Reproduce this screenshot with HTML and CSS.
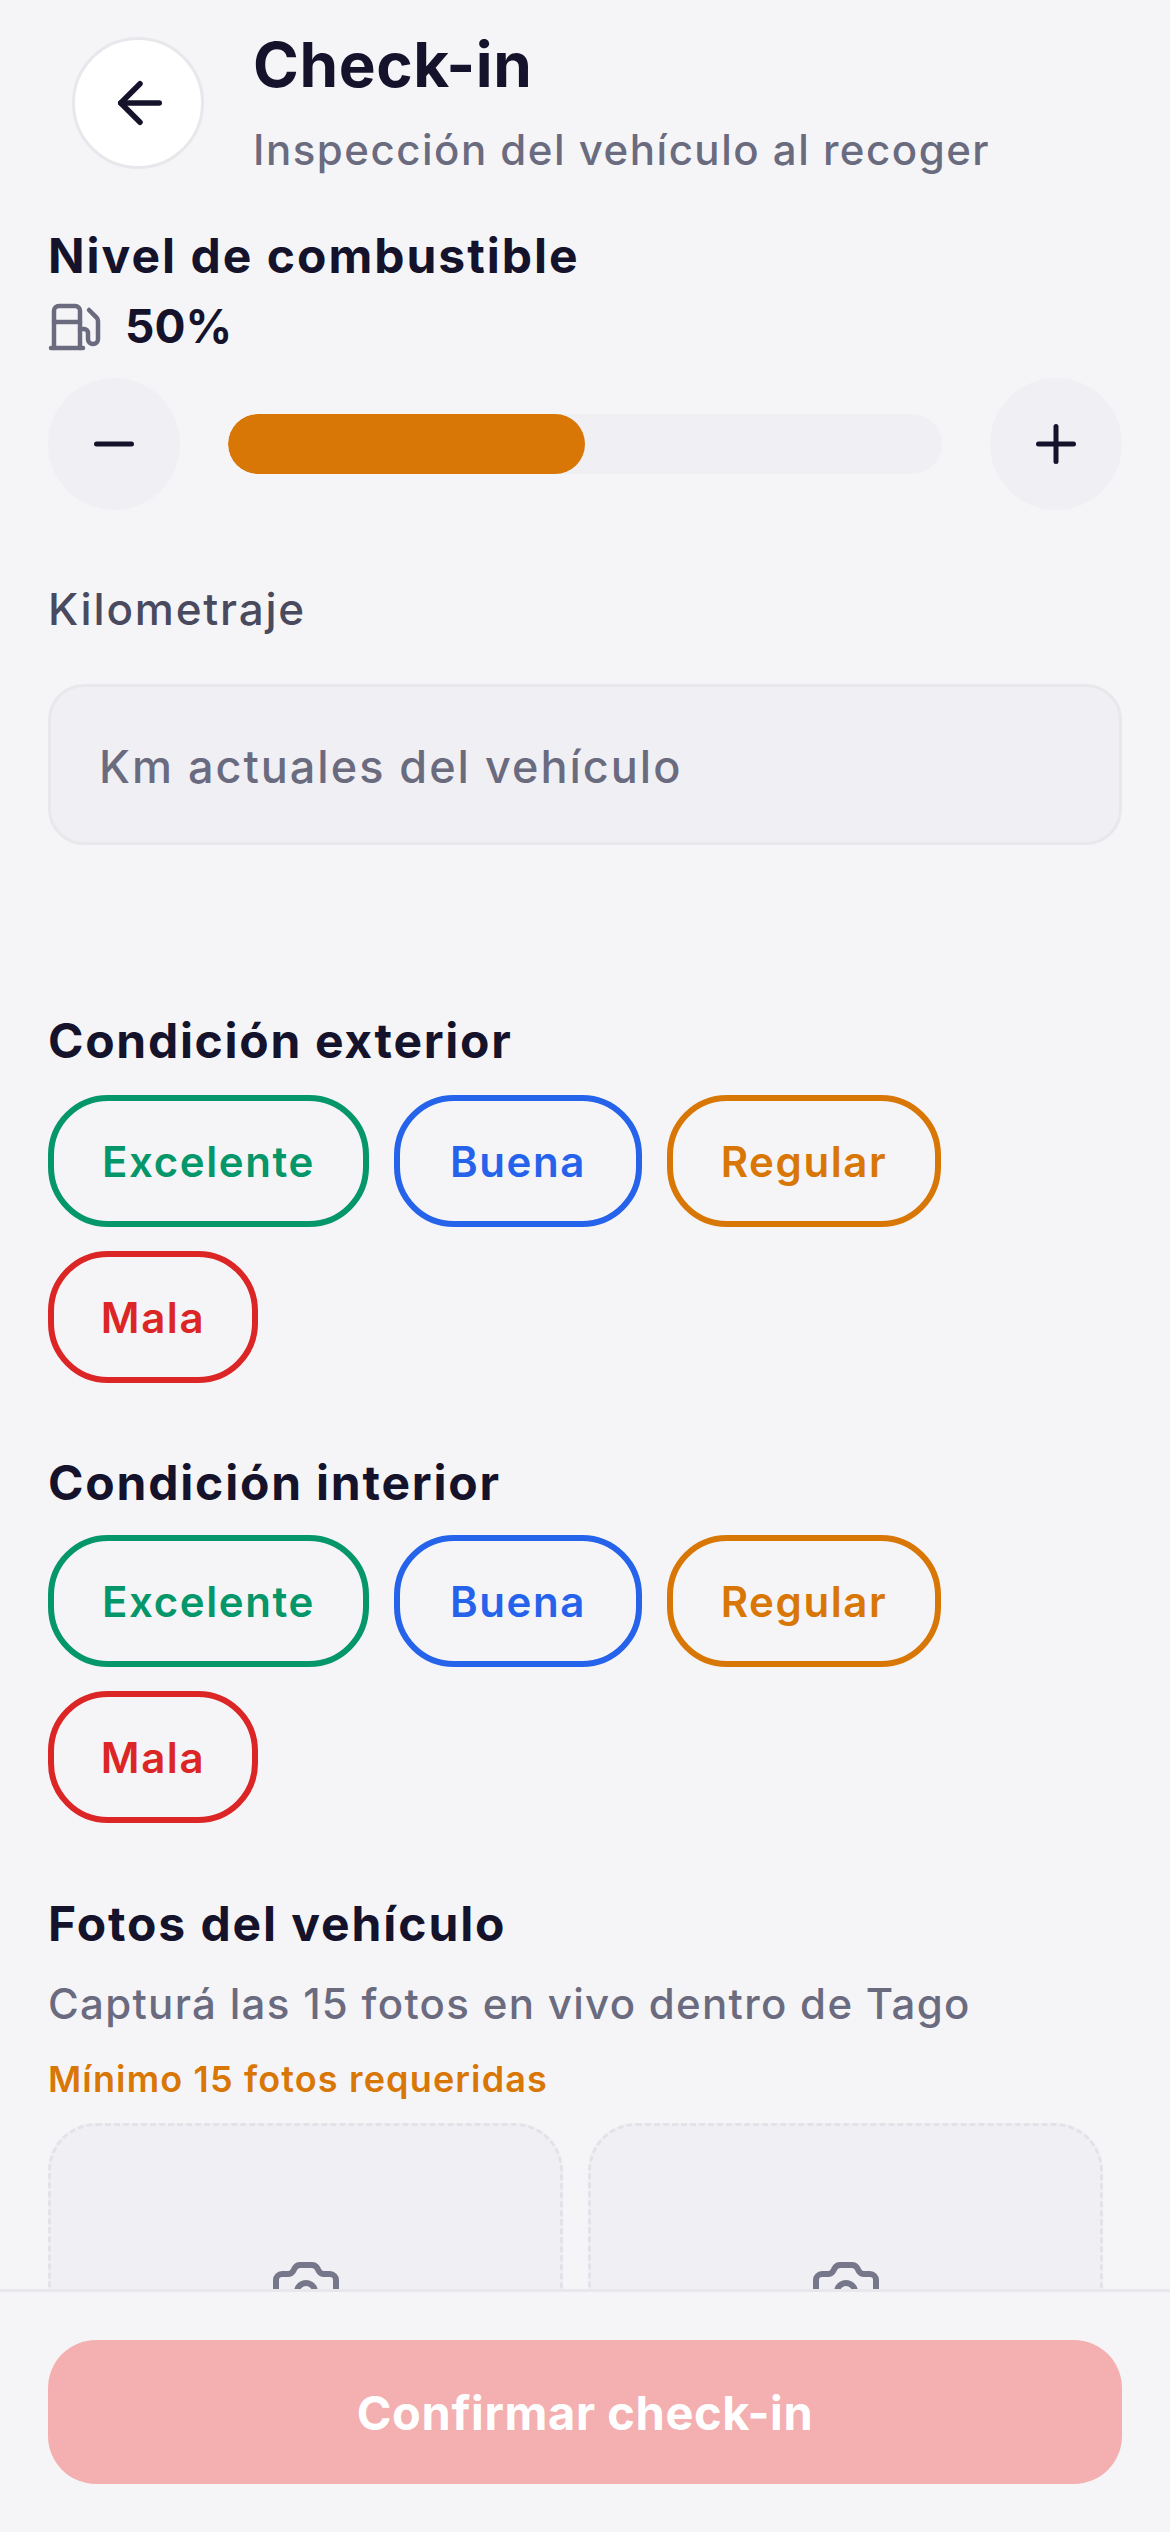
FILE: index.html
```html
<!DOCTYPE html>
<html lang="es">
<head>
<meta charset="utf-8">
<title>Check-in</title>
<link rel="stylesheet" href="styles.css">
</head>
<body>
<div class="screen">
  <main class="content">
    <header class="header">
      <button class="back" aria-label="Volver">
        <svg class="back-icon" viewBox="0 0 24 24"><path d="M12 19l-7-7 7-7"/><path d="M19 12H5"/></svg>
      </button>
      <div class="titles">
        <h1 class="title">Check-in</h1>
        <p class="subtitle">Inspección del vehículo al recoger</p>
      </div>
    </header>

    <h2 class="section fuel-title">Nivel de combustible</h2>
    <div class="fuel-value">
      <svg class="fuel-icon" viewBox="0 0 54 50"><path d="M3 46h32"/><path d="M6 46V9a5 5 0 0 1 5-5h16a5 5 0 0 1 5 5v37"/><path d="M6 20h26"/><path d="M32 27h4a4 4 0 0 1 4 4v6a5 5 0 0 0 5 5a5 5 0 0 0 5-5V19a5 5 0 0 0-1.4-3.4L41 8"/></svg>
      <span class="percent">50%</span>
    </div>
    <div class="slider">
      <button class="step" aria-label="Menos"><svg class="step-icon" viewBox="0 0 24 24"><path d="M5 12h14"/></svg></button>
      <div class="track"><div class="fill"></div></div>
      <button class="step" aria-label="Más"><svg class="step-icon" viewBox="0 0 24 24"><path d="M5 12h14"/><path d="M12 5v14"/></svg></button>
    </div>

    <label class="field-label">Kilometraje</label>
    <div class="input">Km actuales del vehículo</div>

    <h2 class="section cond-exterior">Condición exterior</h2>
    <div class="chips">
      <span class="chip green">Excelente</span>
      <span class="chip blue">Buena</span>
      <span class="chip orange">Regular</span>
      <span class="chip red">Mala</span>
    </div>

    <h2 class="section cond-interior">Condición interior</h2>
    <div class="chips">
      <span class="chip green">Excelente</span>
      <span class="chip blue">Buena</span>
      <span class="chip orange">Regular</span>
      <span class="chip red">Mala</span>
    </div>

    <h2 class="section photos-title">Fotos del vehículo</h2>
    <p class="photos-sub">Capturá las 15 fotos en vivo dentro de Tago</p>
    <p class="photos-min">Mínimo 15 fotos requeridas</p>
    <div class="photos">
      <div class="photo"><svg class="camera" viewBox="0 0 24 24"><path d="M13.997 4a2 2 0 0 1 1.76 1.05l.486.9A2 2 0 0 0 18.003 7H20a2 2 0 0 1 2 2v9a2 2 0 0 1-2 2H4a2 2 0 0 1-2-2V9a2 2 0 0 1 2-2h1.997a2 2 0 0 0 1.759-1.048l.489-.904A2 2 0 0 1 10.004 4z"/><circle cx="12" cy="13" r="3"/></svg></div>
      <div class="photo"><svg class="camera" viewBox="0 0 24 24"><path d="M13.997 4a2 2 0 0 1 1.76 1.05l.486.9A2 2 0 0 0 18.003 7H20a2 2 0 0 1 2 2v9a2 2 0 0 1-2 2H4a2 2 0 0 1-2-2V9a2 2 0 0 1 2-2h1.997a2 2 0 0 0 1.759-1.048l.489-.904A2 2 0 0 1 10.004 4z"/><circle cx="12" cy="13" r="3"/></svg></div>
    </div>
  </main>
  <footer class="footer">
    <button class="confirm">Confirmar check-in</button>
  </footer>
</div>
</body>
</html>
```
FILE: styles.css
```css
* { box-sizing: border-box; margin: 0; padding: 0; }
html, body { width: 1170px; height: 2532px; overflow: hidden; }
body { background: #f5f5f8; font-family: Inter, "Noto Sans", sans-serif; color: #15132b; }
button { font-family: inherit; border: none; }
svg { fill: none; stroke-linecap: round; stroke-linejoin: round; display: block; }

.screen { height: 2532px; display: flex; flex-direction: column; }
.content { height: 2289px; overflow: hidden; padding: 25px 48px 0; flex: none; }

.header { display: flex; align-items: center; gap: 49px; margin-left: 24px; }
.back { width: 132px; height: 132px; border-radius: 50%; background: #fff; border: 3px solid #e8e8ec; display: flex; align-items: center; justify-content: center; flex: none; }
.back-icon { width: 66px; height: 66px; margin-left: 3px; stroke: #15132b; stroke-width: 2; }
.titles { display: flex; flex-direction: column; }
.title { font-size: 62px; line-height: 80px; font-weight: 700; letter-spacing: 0.6px; }
.subtitle { margin-top: 15px; font-size: 42px; line-height: 60px; font-weight: 500; color: #6b6b80; letter-spacing: 1.5px; white-space: nowrap; }

.section { font-size: 48px; line-height: 60px; font-weight: 700; letter-spacing: 2px; }
.fuel-title { margin-top: 46px; }
.fuel-value { margin-top: 10px; height: 60px; display: flex; align-items: center; gap: 23px; }
.fuel-icon { width: 54px; height: 50px; margin-top: 2px; stroke: #6b6b80; stroke-width: 4.5; flex: none; }
.percent { font-size: 46px; line-height: 60px; font-weight: 700; }

.slider { margin-top: 22px; display: flex; align-items: center; gap: 48px; }
.step { width: 132px; height: 132px; border-radius: 50%; background: #f0f0f4; display: flex; align-items: center; justify-content: center; flex: none; }
.step-icon { width: 60px; height: 60px; stroke: #15132b; stroke-width: 2; }
.track { flex: 1; height: 60px; border-radius: 30px; background: #f0f0f4; overflow: hidden; }
.fill { width: 50%; height: 100%; border-radius: 30px; background: #d97706; }

.field-label { display: block; margin-top: 69px; font-size: 44px; line-height: 60px; font-weight: 500; color: #4a4a5e; letter-spacing: 1.8px; }
.input { margin-top: 45px; height: 161px; border-radius: 36px; background: #f0f0f4; border: 3px solid #e8e8ec; padding: 3px 48px 0; display: flex; align-items: center; font-size: 45px; font-weight: 500; color: #6b6b80; letter-spacing: 2px; }

.cond-exterior { margin-top: 166px; letter-spacing: 1.7px; }
.cond-interior { margin-top: 70px; letter-spacing: 1.8px; }
.chips { margin-top: 24px; display: flex; flex-wrap: wrap; gap: 24px 25px; width: 1000px; }
.cond-interior + .chips { margin-top: 22px; }
.chip { height: 132px; border-radius: 60px; border: 6px solid; display: flex; align-items: center; justify-content: center; font-size: 42px; font-weight: 600; letter-spacing: 1.6px; }
.green { color: #059669; width: 321px; }
.blue { color: #2563eb; width: 248px; }
.orange { color: #d97706; width: 274px; }
.red { color: #dc2626; width: 210px; }

.photos-title { margin-top: 71px; letter-spacing: 1.9px; }
.photos-sub { margin-top: 20px; font-size: 42px; line-height: 60px; font-weight: 500; color: #6b6b80; letter-spacing: 1.3px; white-space: nowrap; }
.photos-min { margin-top: 18px; font-size: 36px; line-height: 54px; font-weight: 600; color: #d97706; letter-spacing: 1.15px; }
.photos { margin-top: 17px; display: grid; grid-template-columns: 515px 515px; gap: 25px; }
.photo { height: 400px; border-radius: 48px; background: #f0f0f4; border: 3px dashed #e2e2e8; padding-top: 127px; display: flex; justify-content: center; align-items: flex-start; }
.camera { width: 72px; height: 72px; stroke: #6b6b80; stroke-width: 2; opacity: 0.9; }

.footer { height: 243px; flex: none; border-top: 3px solid #e8e8ec; padding: 48px; background: #f5f5f8; }
.confirm { width: 100%; height: 144px; border-radius: 48px; background: #f4b0b0; color: #fff; font-size: 47px; font-weight: 700; letter-spacing: 0.6px; }
```
